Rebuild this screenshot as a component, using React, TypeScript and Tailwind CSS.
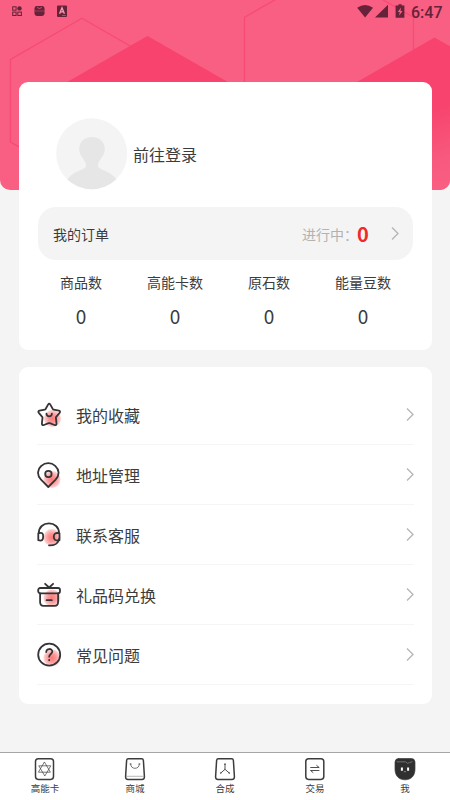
import { ReactNode } from "react";

const Arrow = () => (
  <svg className="shrink-0" width="8" height="14" viewBox="0 0 8 14" fill="none" stroke="#b5b5b5" strokeWidth="1.3">
    <path d="M1 0.5L7 6.5L1 12.5" />
  </svg>
);

const StatusBar = () => (
  <div className="absolute left-0 top-0 w-full h-6 flex items-center justify-between pl-3 pr-2 text-[#652238]">
    <svg width="60" height="14" viewBox="0 0 60 14" fill="none">
      <g stroke="currentColor" strokeWidth="1">
        <rect x="0.7" y="1.8" width="3.4" height="3.4" />
        <rect x="0.7" y="7.1" width="3.4" height="3.4" />
        <rect x="5.8" y="7.1" width="3.6" height="3.4" />
      </g>
      <circle cx="7.5" cy="3.4" r="2.2" fill="currentColor" />
      <rect x="22.5" y="1" width="10" height="10" rx="2.4" fill="currentColor" />
      <path d="M25.3 2.5q2.2 2 4.4 0" stroke="#f85f82" strokeWidth="0.8" />
      <path d="M23 6h9" stroke="#a84460" strokeWidth="0.8" />
      <rect x="45" y="0.5" width="10" height="11.5" rx="1" fill="currentColor" />
      <path d="M47.6 8.7L50 2.8l2.4 5.9M48.5 6.8h3" stroke="#f9a0b4" strokeWidth="1.3" />
      <path d="M50.5 10.5h1M52.5 10.5h1" stroke="#f9a0b4" strokeWidth="0.8" />
    </svg>
    <div className="flex items-center">
      <svg width="50" height="16" viewBox="0 0 50 16" fill="currentColor">
        <path d="M0.2 3.8Q8 -1.8 16 3.8L8.1 13.6Z" />
        <path d="M31 0.7V13.6H18Z" />
        <path d="M41.5 0.2h3.2v1.2h2.7v12.3h-8.8V1.4h2.9Z" />
        <path d="M44 3.4L40.7 8h2l-0.6 3.8L45.5 7h-2Z" fill="#f85f82" />
      </svg>
      <span className="ml-1 w-[31px] pt-0.5 font-['Roboto',sans-serif] text-[16px] leading-6 font-medium">6:47</span>
    </div>
  </div>
);

const Header = () => (
  <header className="relative h-[190px] rounded-b-[10px] overflow-hidden bg-[#f85f82]">
    <svg className="block" width="450" height="190" viewBox="0 0 450 190" fill="none">
      <defs>
        <linearGradient id="hex" x1="400" y1="38" x2="440" y2="190" gradientUnits="userSpaceOnUse">
          <stop offset="0.48" stopColor="#f7436d" />
          <stop offset="0.83" stopColor="#f85a7f" />
          <stop offset="1" stopColor="#f85f82" />
        </linearGradient>
      </defs>
      <path
        d="M82 18.3L153.5 59.5V142L82 183L10.5 142V59.5ZM244.5 100V17.3L329 -31L413.5 17.3V100"
        stroke="#f84b74"
        strokeWidth="1.3"
      />
      <path d="M147.5 36L247 93V190H48V93Z" fill="#f7436d" />
      <path d="M434.5 37.5L530 92V190H310V109Z" fill="url(#hex)" />
    </svg>
    <StatusBar />
  </header>
);

const stats = [
  { name: "商品数", value: 0 },
  { name: "高能卡数", value: 0 },
  { name: "原石数", value: 0 },
  { name: "能量豆数", value: 0 },
];

const ProfileCard = () => (
  <section className="relative -mt-[108px] ml-[19px] mr-[18px] h-[268px] rounded-[9px] bg-white px-[19px]">
    <div className="flex items-center pt-9 pl-[18px]">
      <svg width="72" height="72" viewBox="0 0 72 72">
        <defs>
          <clipPath id="avatar">
            <circle cx="35.7" cy="35.7" r="35.5" />
          </clipPath>
        </defs>
        <circle cx="35.7" cy="35.7" r="35.5" fill="#f4f4f4" />
        <path
          clipPath="url(#avatar)"
          fill="#e6e6e6"
          d="M36 19C28 19 23.2 24 23.2 31.5C23.2 38 30 42 30 47.5C30 53 17 51 10 64V72H62V64C55 51 42 53 42 47.5C42 42 48.8 38 48.8 31.5C48.8 24 44 19 36 19Z"
        />
      </svg>
      <span className="ml-[5px] text-[16px] leading-6">前往登录</span>
    </div>

    <div className="mt-[17px] h-[53px] rounded-[18px] bg-[#f4f4f4] flex items-center pl-[15px] pr-[14px]">
      <span className="pt-px text-[14px]">我的订单</span>
      <span className="ml-auto pt-px text-[14px] text-[#b2b2b2]">进行中：</span>
      <span className="w-[14px] -ml-[1px] text-[20px] leading-6 font-bold text-[#f02a2a]">0</span>
      <div className="ml-[20px]">
        <Arrow />
      </div>
    </div>

    <div className="grid grid-cols-4 mt-3 -ml-1 mr-[3px]">
      {stats.map((item) => (
        <div key={item.name} className="flex flex-col items-center">
          <span className="text-[14px] leading-5">{item.name}</span>
          <span className="mt-3 text-[19px] leading-6">{item.value}</span>
        </div>
      ))}
    </div>
  </section>
);

const MenuIcon = ({ cx = 15, cy = 16, children }: { cx?: number; cy?: number; children: ReactNode }) => (
  <svg width="26" height="26" viewBox="0 0 26 26" fill="none" stroke="#343437" strokeWidth="1.8" strokeLinecap="round" strokeLinejoin="round">
    <circle cx={cx} cy={cy} r="8.5" fill="url(#blush)" stroke="none" />
    {children}
  </svg>
);

const menu = [
  {
    name: "我的收藏",
    icon: (
      <MenuIcon cx={15.5} cy={16.5}>
        <path d="M11.2 2.4Q12.2 0.8 13.2 2.4L15.8 7Q16.1 7.5 16.7 7.6L21.9 8.7Q23.8 9.4 22.6 10.9L19.2 14.8Q18.8 15.3 18.9 15.9L19.5 21.6Q19.4 23.6 17.5 23L12.8 21.2Q12.2 21 11.6 21.2L6.9 23Q5 23.6 4.9 21.6L5.5 15.9Q5.6 15.3 5.2 14.8L1.8 10.9Q0.6 9.4 2.5 8.7L7.7 7.6Q8.3 7.5 8.6 7Z" />
        <path d="M9.5 11.7C9.7 15.2 14.7 15.2 14.9 11.7" />
      </MenuIcon>
    ),
  },
  {
    name: "地址管理",
    icon: (
      <MenuIcon cx={15} cy={17.5}>
        <path d="M11.3 25L4 17.7C-0.5 13 0.6 7 4.4 3.8C8.3 0.3 14.3 0.3 18.2 3.8C22.1 7.3 23 13 18.6 17.7Z" />
        <circle cx="11.4" cy="12" r="3.2" />
      </MenuIcon>
    ),
  },
  {
    name: "联系客服",
    icon: (
      <MenuIcon cx={15} cy={15.5}>
        <path d="M1.8 11.2C1.8 5 6.3 1.4 11.9 1.4S22 5 22 11.2M22 17C21.5 21.5 17 23.5 12 23.3" />
        <path d="M1.3 11.3C5.2 10.3 6.2 11.3 6.2 14.5S5.2 19.3 1.3 18.2ZM22.5 11.3C18.2 10.3 16.8 12 16.8 14.7S18.2 19.3 22.5 18.2Z" />
      </MenuIcon>
    ),
  },
  {
    name: "礼品码兑换",
    icon: (
      <MenuIcon cx={15} cy={16}>
        <rect x="1.2" y="6" width="21.8" height="5.3" rx="2" />
        <path d="M3.1 11.5V20Q3.1 23.8 6.5 23.8H17.7Q21.1 23.8 21.1 20V11.5M9.6 18.2H14.8M8.1 1.8L12.1 5.5L16.1 1.8" />
      </MenuIcon>
    ),
  },
  {
    name: "常见问题",
    icon: (
      <MenuIcon cx={15} cy={16}>
        <circle cx="12.2" cy="12.7" r="11" />
        <path d="M9.2 10C9.4 6 15.3 6.2 15.3 9.6C15.3 12 12.2 12 12.2 14.7M12.2 18v0.2" />
      </MenuIcon>
    ),
  },
];

const MenuCard = () => (
  <section className="mt-[17px] ml-[19px] mr-[18px] h-[337px] rounded-[9px] bg-white px-[18px] pt-[18px]">
    {menu.map((item) => (
      <div key={item.name} className="h-[60px] flex items-center border-b border-[#f5f5f5]">
        {item.icon}
        <span className="ml-[13px] pt-px text-[16px] leading-6">{item.name}</span>
        <div className="ml-auto">
          <Arrow />
        </div>
      </div>
    ))}
  </section>
);

const TabIcon = ({ children }: { children: ReactNode }) => (
  <svg width="22" height="24" viewBox="0 0 22 24" fill="none" stroke="#3c3c3c" strokeWidth="0.7" strokeLinecap="round" strokeLinejoin="round">
    {children}
  </svg>
);

const tabs = [
  {
    name: "高能卡",
    icon: (
      <TabIcon>
        <rect x="1.5" y="1.8" width="18" height="20.6" rx="2.8" strokeWidth="1.5" />
        <path d="M10.6 5.3L16.4 15.2H4.8ZM10.6 18.7L4.8 8.8H16.4Z" />
      </TabIcon>
    ),
  },
  {
    name: "商城",
    icon: (
      <TabIcon>
        <path d="M4.3 1.8H17.7Q19.2 1.8 19.4 3.5L20.4 19.5Q20.5 22.4 18 22.4H4Q1.5 22.4 1.6 19.5L2.6 3.5Q2.8 1.8 4.3 1.8Z" strokeWidth="1.5" />
        <path d="M6.6 7Q7 11.3 11 11.3T15.4 7M6 7h1.2M14.8 7H16" />
        <path d="M2.2 19.3H19.8" stroke="#999999" />
      </TabIcon>
    ),
  },
  {
    name: "合成",
    icon: (
      <TabIcon>
        <path d="M4.3 1.8H17.7Q19.2 1.8 19.4 3.5L20.4 19.5Q20.5 22.4 18 22.4H4Q1.5 22.4 1.6 19.5L2.6 3.5Q2.8 1.8 4.3 1.8Z" strokeWidth="1.5" />
        <path d="M11 7.5V12.3L7 15.8M11 12.3L15 15.8" strokeWidth="0.9" />
        <path d="M11 7v0.2M6.8 16v0.1M15.2 16v0.1" strokeWidth="1.5" />
      </TabIcon>
    ),
  },
  {
    name: "交易",
    icon: (
      <TabIcon>
        <rect x="1.8" y="1.8" width="18" height="20.6" rx="2.8" strokeWidth="1.5" />
        <path d="M6.7 10.5H15.2L12.7 8.5M15 13.5H6.5L9 15.5" strokeWidth="0.9" />
      </TabIcon>
    ),
  },
  {
    name: "我",
    icon: (
      <TabIcon>
        <path d="M4.5 1.5H17.5Q20.8 1.5 21 5V12C21 19 17 22.8 11 22.8S1 19 1 12V5Q1.2 1.5 4.5 1.5Z" fill="#303030" />
        <path d="M3 4.8H11.5L13.5 6.3L15.5 5.6L18 4.8" stroke="#8b8b8b" />
        <path d="M7.9 10.4v3.4M14.1 10.4v3.4" stroke="#ffffff" strokeWidth="2" strokeLinecap="butt" />
        <path d="M10.3 14.7h1.4" stroke="#aaaaaa" />
      </TabIcon>
    ),
  },
];

const TabBar = () => (
  <nav className="mt-auto h-12 grid grid-cols-5 border-t border-[#a5a5a5] bg-white">
    {tabs.map((tab) => (
      <div key={tab.name} className="flex flex-col items-center pt-1">
        {tab.icon}
        <span className="text-[9.5px] leading-[14px]">{tab.name}</span>
      </div>
    ))}
  </nav>
);

export default function App() {
  return (
    <div className="w-[450px] h-[800px] flex flex-col overflow-hidden bg-[#f4f4f4] text-[#3c3c3c] font-['Noto_Sans_CJK_SC',sans-serif]">
      <svg className="absolute" width="0" height="0">
        <defs>
          <radialGradient id="blush">
            <stop offset="0" stopColor="#fb7878" />
            <stop offset="0.5" stopColor="#fb9a9a" />
            <stop offset="1" stopColor="#fed8d8" />
          </radialGradient>
        </defs>
      </svg>
      <Header />
      <ProfileCard />
      <MenuCard />
      <TabBar />
    </div>
  );
}
